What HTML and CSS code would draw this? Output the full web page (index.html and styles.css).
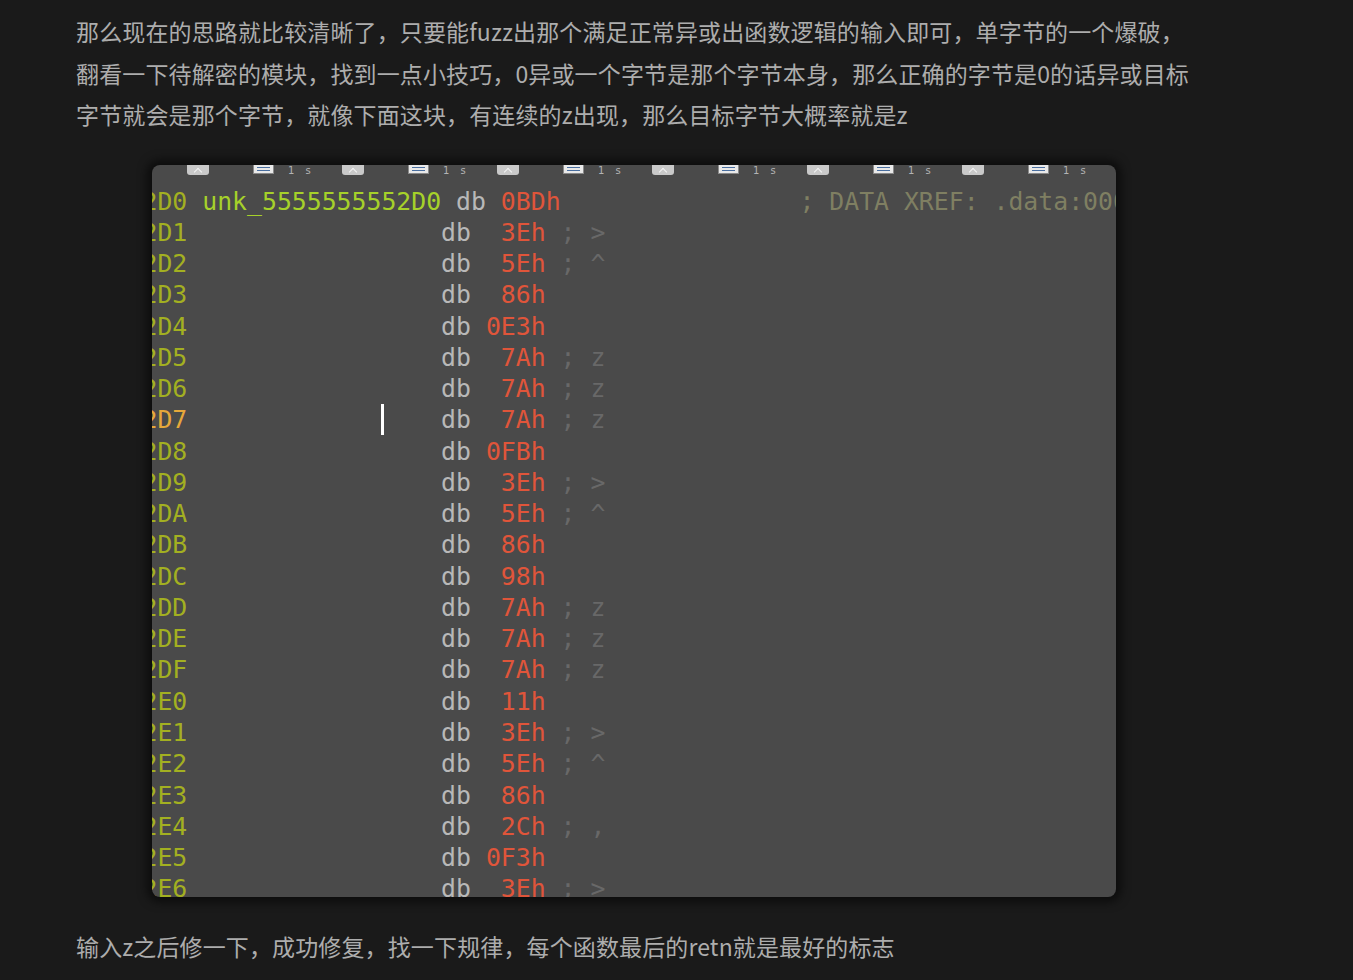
FILE: index.html
```html
<!DOCTYPE html>
<html lang="zh-CN">
<head>
<meta charset="utf-8">
<title>fuzz</title>
<link rel="stylesheet" href="styles.css">
</head>
<body>
<main class="article">
  <p class="para">那么现在的思路就比较清晰了，只要能fuzz出那个满足正常异或出函数逻辑的输入即可，单字节的一个爆破，<br>翻看一下待解密的模块，找到一点小技巧，0异或一个字节是那个字节本身，那么正确的字节是0的话异或目标<br>字节就会是那个字节，就像下面这块，有连续的z出现，那么目标字节大概率就是z</p>

  <figure class="shot">
    <div class="toolbar">
      <div class="tgroup"><span class="tbtn"><span class="chev"></span></span><span class="tlist"><i></i><i></i><i></i></span><span class="ttext">1 s</span></div>
      <div class="tgroup"><span class="tbtn"><span class="chev"></span></span><span class="tlist"><i></i><i></i><i></i></span><span class="ttext">1 s</span></div>
      <div class="tgroup"><span class="tbtn"><span class="chev"></span></span><span class="tlist"><i></i><i></i><i></i></span><span class="ttext">1 s</span></div>
      <div class="tgroup"><span class="tbtn"><span class="chev"></span></span><span class="tlist"><i></i><i></i><i></i></span><span class="ttext">1 s</span></div>
      <div class="tgroup"><span class="tbtn"><span class="chev"></span></span><span class="tlist"><i></i><i></i><i></i></span><span class="ttext">1 s</span></div>
      <div class="tgroup"><span class="tbtn"><span class="chev"></span></span><span class="tlist"><i></i><i></i><i></i></span><span class="ttext">1 s</span></div>
    </div>
<pre class="code"><span class="off">2D0</span> <span class="lbl">unk_5555555552D0</span> <span class="kw">db</span> <span class="num">0BDh</span>                <span class="xref">; DATA XREF: .data:0000555555558010</span>
<span class="off">2D1</span>                 <span class="kw">db</span>  <span class="num">3Eh</span> <span class="cmt">; &gt;</span>
<span class="off">2D2</span>                 <span class="kw">db</span>  <span class="num">5Eh</span> <span class="cmt">; ^</span>
<span class="off">2D3</span>                 <span class="kw">db</span>  <span class="num">86h</span>
<span class="off">2D4</span>                 <span class="kw">db</span> <span class="num">0E3h</span>
<span class="off">2D5</span>                 <span class="kw">db</span>  <span class="num">7Ah</span> <span class="cmt">; z</span>
<span class="off">2D6</span>                 <span class="kw">db</span>  <span class="num">7Ah</span> <span class="cmt">; z</span>
<span class="off cur">2D7</span>             <span class="caret"></span>    <span class="kw">db</span>  <span class="num">7Ah</span> <span class="cmt">; z</span>
<span class="off">2D8</span>                 <span class="kw">db</span> <span class="num">0FBh</span>
<span class="off">2D9</span>                 <span class="kw">db</span>  <span class="num">3Eh</span> <span class="cmt">; &gt;</span>
<span class="off">2DA</span>                 <span class="kw">db</span>  <span class="num">5Eh</span> <span class="cmt">; ^</span>
<span class="off">2DB</span>                 <span class="kw">db</span>  <span class="num">86h</span>
<span class="off">2DC</span>                 <span class="kw">db</span>  <span class="num">98h</span>
<span class="off">2DD</span>                 <span class="kw">db</span>  <span class="num">7Ah</span> <span class="cmt">; z</span>
<span class="off">2DE</span>                 <span class="kw">db</span>  <span class="num">7Ah</span> <span class="cmt">; z</span>
<span class="off">2DF</span>                 <span class="kw">db</span>  <span class="num">7Ah</span> <span class="cmt">; z</span>
<span class="off">2E0</span>                 <span class="kw">db</span>  <span class="num">11h</span>
<span class="off">2E1</span>                 <span class="kw">db</span>  <span class="num">3Eh</span> <span class="cmt">; &gt;</span>
<span class="off">2E2</span>                 <span class="kw">db</span>  <span class="num">5Eh</span> <span class="cmt">; ^</span>
<span class="off">2E3</span>                 <span class="kw">db</span>  <span class="num">86h</span>
<span class="off">2E4</span>                 <span class="kw">db</span>  <span class="num">2Ch</span> <span class="cmt">; ,</span>
<span class="off">2E5</span>                 <span class="kw">db</span> <span class="num">0F3h</span>
<span class="off">2E6</span>                 <span class="kw">db</span>  <span class="num">3Eh</span> <span class="cmt">; &gt;</span></pre>
  </figure>

  <p class="para">输入z之后修一下，成功修复，找一下规律，每个函数最后的retn就是最好的标志</p>
</main>
</body>
</html>
```

FILE: styles.css
```css
html, body {
  margin: 0;
  padding: 0;
  background: #1a1a1a;
}

.article {
  padding: 11px 76px 0 76px;
}

.para {
  margin: 0;
  font-family: "Noto Sans CJK SC", "Noto Sans", sans-serif;
  font-size: 23px;
  letter-spacing: 0.13px;
  line-height: 41.5px;
  color: #adadad;
  white-space: nowrap;
}

.shot {
  margin: 29px 0 29px 76px;
  width: 964px;
  height: 732px;
  background: #4a4a4a;
  border-radius: 8px;
  overflow: hidden;
  box-shadow: 0 0 10px 5px rgba(0, 0, 0, 0.55);
}

.toolbar {
  height: 21px;
  display: flex;
  padding-left: 35px;
  overflow: hidden;
}

.tgroup {
  flex: 0 0 155px;
  display: flex;
  align-items: flex-start;
}

.tbtn {
  width: 22px;
  height: 10px;
  border-radius: 0 0 3px 3px;
  background: #c9c9c9;
  display: flex;
  align-items: flex-end;
  justify-content: center;
}

.chev {
  width: 5px;
  height: 5px;
  border-left: 1.5px solid #f4f4f4;
  border-top: 1.5px solid #f4f4f4;
  transform: rotate(45deg);
  margin-bottom: 0;
}

.tlist {
  margin-left: 44px;
  width: 21px;
  height: 9px;
  background: #e9e9e9;
  border: 1px solid #8a8a8a;
  border-top: 0;
  display: flex;
  flex-direction: column;
  justify-content: flex-end;
  gap: 2px;
  padding: 0 3px 2px 3px;
  box-sizing: border-box;
}

.tlist i {
  display: block;
  height: 1px;
  background: #4a6fa0;
}

.ttext {
  margin-left: 14px;
  margin-top: 0;
  font-family: "DejaVu Sans", sans-serif;
  font-size: 10px;
  line-height: 11px;
  color: #b4b4b4;
  letter-spacing: 4px;
}

.code {
  margin: 0 0 0 -9.5px;
  font-family: "DejaVu Sans Mono", monospace;
  font-size: 24.8px;
  line-height: 31.27px;
  color: #b8b8b8;
  white-space: pre;
}

.off { color: #a3b021; }
.off.cur { color: #e6a83a; }
.lbl { color: #a6d12a; }
.kw { color: #b8b8b8; }
.num { color: #e0553a; }
.cmt { color: #686868; }
.xref { color: #7f7f62; }

.caret {
  display: inline-block;
  width: 0;
  height: 31px;
  border-left: 3px solid #ffffff;
  margin-right: -3px;
  vertical-align: -7px;
}
```
